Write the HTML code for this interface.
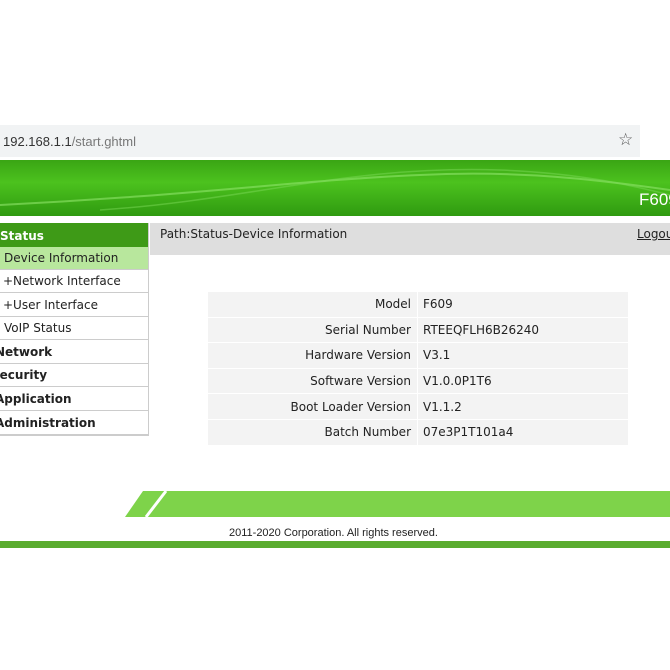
<!DOCTYPE html>
<html><head><meta charset="utf-8"><style>
body{margin:0;width:670px;height:670px;background:#fff;position:relative;overflow:hidden;font-family:"DejaVu Sans","Liberation Sans",sans-serif;font-size:12px;color:#222}
.abs{position:absolute}
.side div{position:absolute;left:0;width:148px;height:23px;border-bottom:1px solid #ccc;line-height:23px;box-sizing:border-box}
table{border-collapse:collapse}
td{height:24.6px;padding:0;border-bottom:1px solid #fff;background:#f3f3f3;font-size:12px}
td.l{text-align:right;padding-right:6px;width:203px;border-right:1px solid #fff}
td.r{padding-left:5px}
</style></head><body>
<div class="abs" style="left:0;top:125px;width:640px;height:32px;background:#f1f3f4"></div>
<div class="abs" style="left:3px;top:134px;font-size:13px;font-family:'Liberation Sans',sans-serif;color:#333">192.168.1.1<span style="color:#777">/start.ghtml</span></div>
<div class="abs" style="left:618px;top:130px;font-size:17px;color:#555">☆</div>
<div class="abs" style="left:0;top:160px;width:670px;height:56px;background:linear-gradient(180deg,#3aa514 0%,#4cc21e 40%,#2f9a10 100%)"></div>
<svg class="abs" style="left:0;top:160px" width="670" height="56"><path d="M0 45 C200 35 300 20 420 15 C520 10 600 20 670 30" stroke="#8fe56a" stroke-width="2" fill="none" opacity=".6"/><path d="M100 50 C250 40 350 5 500 10 C580 13 630 25 670 35" stroke="#7ad855" stroke-width="1.5" fill="none" opacity=".5"/></svg>
<div class="abs" style="left:639px;top:190px;color:#fff;font-size:17px;font-family:'Liberation Sans',sans-serif">F609</div>
<div class="side">
<div style="top:223px;height:24px;background:#3e9a17;color:#fff;font-weight:bold;border:none;line-height:26px">Status</div>
<div style="top:247px;background:#b8e79d;padding-left:4px">Device Information</div>
<div style="top:270px;padding-left:3px">+Network Interface</div>
<div style="top:294px;padding-left:3px">+User Interface</div>
<div style="top:317px;padding-left:4px">VoIP Status</div>
<div style="top:341px;font-weight:bold;text-indent:-5px">Network</div>
<div style="top:364px;font-weight:bold;text-indent:-9px">Security</div>
<div style="top:388px;font-weight:bold;text-indent:-5px">Application</div>
<div style="top:412px;font-weight:bold;text-indent:-5px;border-bottom:2px solid #ccc;height:24px">Administration</div>
</div>
<div class="abs" style="left:148px;top:223px;width:1px;height:213px;background:#ccc"></div>
<div class="abs" style="left:150px;top:223px;width:520px;height:32px;background:#dedede"></div>
<div class="abs" style="left:160px;top:227px">Path:Status-Device Information</div>
<div class="abs" style="left:637px;top:227px;text-decoration:underline">Logout</div>
<table class="abs" style="left:208px;top:292px;width:420px">
<tr><td class="l">Model</td><td class="r">F609</td></tr>
<tr><td class="l">Serial Number</td><td class="r">RTEEQFLH6B26240</td></tr>
<tr><td class="l">Hardware Version</td><td class="r">V3.1</td></tr>
<tr><td class="l">Software Version</td><td class="r">V1.0.0P1T6</td></tr>
<tr><td class="l">Boot Loader Version</td><td class="r">V1.1.2</td></tr>
<tr><td class="l">Batch Number</td><td class="r">07e3P1T101a4</td></tr>
</table>
<svg class="abs" style="left:0;top:490px" width="670" height="28"><polygon points="125,27 143,1 670,1 670,27" fill="#7ed34a"/><line x1="146" y1="27" x2="166" y2="1" stroke="#fff" stroke-width="3"/></svg>
<div class="abs" style="left:229px;top:527px;font-size:11px;font-family:'Liberation Sans',sans-serif">2011-2020 Corporation. All rights reserved.</div>
<div class="abs" style="left:0;top:541px;width:670px;height:7px;background:#5aac2f"></div>
</body></html>
